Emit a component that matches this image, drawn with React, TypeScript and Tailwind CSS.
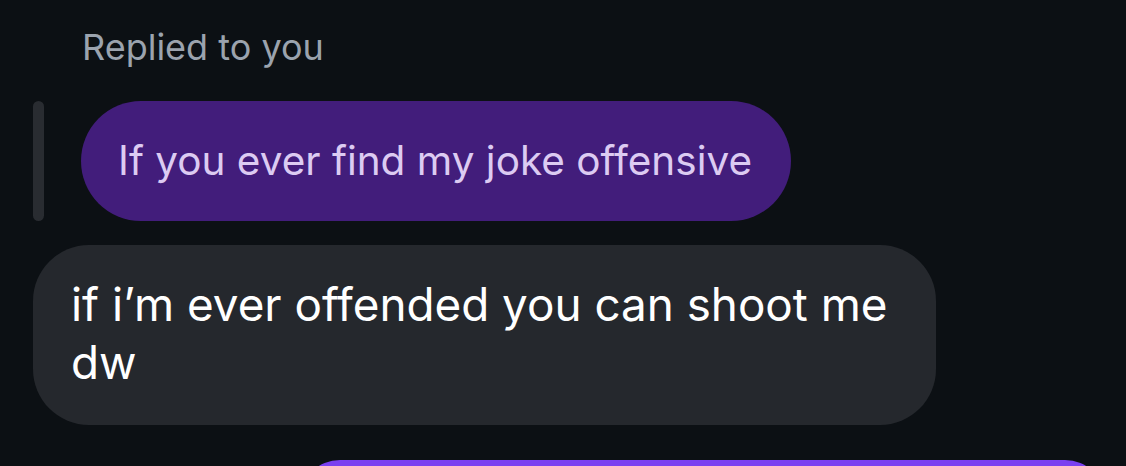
export default function App() {
  return (
    <div
      className="flex h-[466px] w-[1126px] flex-col overflow-hidden bg-[#0c1014]"
      style={{ fontFamily: 'Inter, "Noto Sans", sans-serif' }}
    >
      <div className="pl-[82px] pt-[26px] text-[36px] leading-[42px] text-[#9ba3ae]">
        Replied to you
      </div>

      <div className="mt-[33px] flex items-stretch">
        <div className="ml-[33px] w-[11px] rounded-full bg-[#292c31]" />
        <div className="ml-[37px] flex h-[120px] items-center rounded-full bg-[#421d7b] pl-[37px] pr-[39px] text-[40.5px] text-[#dccbf2]">
          If you ever find my joke offensive
        </div>
      </div>

      <div className="ml-[33px] mt-[24px] w-[903px] rounded-[56px] bg-[#25282d] pb-[33px] pl-[38px] pr-[40px] pt-[31px] text-[45.8px] leading-[58px] text-white">
        if i’m ever offended you can shoot me dw
      </div>

      <div className="ml-[300px] mt-[35px] h-[80px] w-[805px] shrink-0 rounded-[48px] bg-[#7a40f0]" />
    </div>
  );
}
